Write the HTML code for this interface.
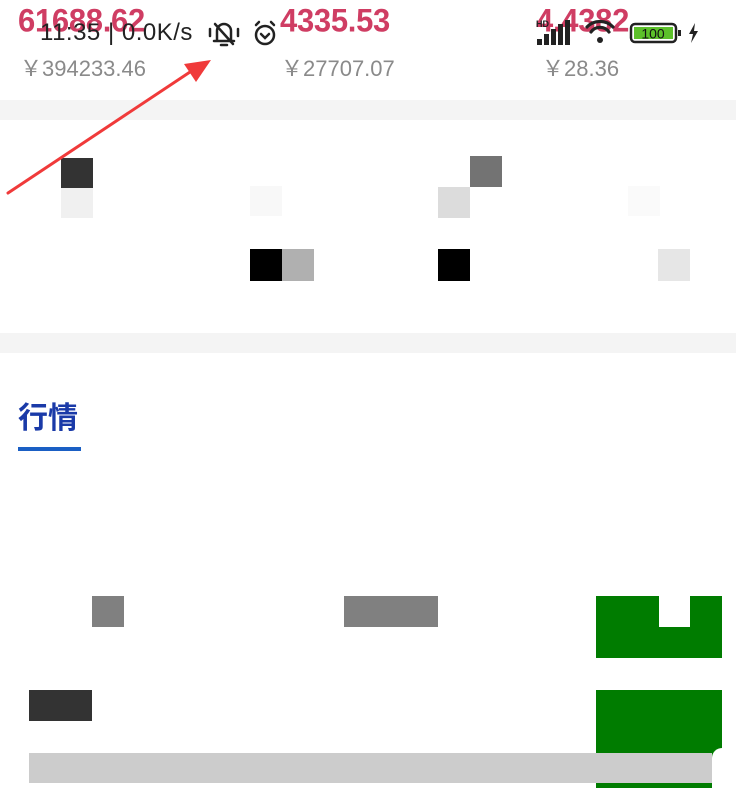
<!DOCTYPE html>
<html><head><meta charset="utf-8"><style>
*{margin:0;padding:0;box-sizing:border-box}
html,body{width:736px;height:788px;overflow:hidden;background:#fff;position:relative;font-family:"Liberation Sans","Noto Sans CJK SC",sans-serif}
.a{position:absolute}
.p{color:#cf3d63;font-size:31px;font-weight:bold;letter-spacing:-0.3px;top:2px;transform:scaleY(1.05);transform-origin:left top}
.s{color:#8a8a8a;font-size:22px;top:51px}
.b{position:absolute}
</style></head><body>
<div class="a p" style="left:18px">61688.62</div>
<div class="a p" style="left:280px">4335.53</div>
<div class="a p" style="left:536px">4.4382</div>
<div class="a s" style="left:20px">￥394233.46</div>
<div class="a s" style="left:281px">￥27707.07</div>
<div class="a s" style="left:542px">￥28.36</div>
<div class="a" style="left:40px;top:19px;font-size:24px;color:#222;letter-spacing:0.5px">11:35 | 0.0K/s</div>
<svg class="a" style="left:206px;top:16px" width="80" height="34" viewBox="0 0 80 34">
<g fill="none" stroke="#222" stroke-width="2.5" stroke-linecap="round">
<path d="M11 24 V15 a7 7 0 0 1 14 0 V24 M8 25 H28 M15 29 H21"/>
<path d="M9 8 L27 28"/>
<path d="M4 13 v7 M32 13 v7"/>
<circle cx="59" cy="19" r="9"/>
<path d="M55 18 l4 4 l4 -4 M50 9 l3 -3 M68 9 l-3 -3"/>
</g></svg>
<svg class="a" style="left:535px;top:17px" width="170" height="30" viewBox="0 0 170 30">
<text x="1" y="10" font-size="9" font-weight="bold" fill="#222" font-family="Liberation Sans">HD</text>
<g fill="#222"><rect x="2" y="22" width="5" height="6"/><rect x="9" y="17" width="5" height="11"/><rect x="16" y="12" width="5" height="16"/><rect x="23" y="7" width="5" height="21"/><rect x="30" y="3" width="5" height="25"/></g>
<g fill="none" stroke="#222" stroke-width="3.2" stroke-linecap="round"><path d="M52 10 a18 18 0 0 1 26 0"/><path d="M56 15 a11 11 0 0 1 18 0"/></g>
<circle cx="65" cy="23" r="3" fill="#222"/>
<rect x="96" y="7" width="45" height="18" rx="4" fill="none" stroke="#222" stroke-width="2.5"/>
<rect x="99" y="10" width="39" height="12" fill="#5cc02a"/>
<rect x="143" y="13" width="3" height="6" fill="#222"/>
<text x="118" y="21.5" font-size="14" text-anchor="middle" fill="#111" font-family="Liberation Sans">100</text>
<path d="M160 6 l-6 11 h4 l-2 9 l7 -12 h-4 z" fill="#222"/>
</svg>
<div class="b" style="left:0;top:100px;width:736px;height:20px;background:#f4f4f4"></div>
<div class="b" style="left:0;top:333px;width:736px;height:20px;background:#f4f4f4"></div>
<div class="b" style="left:61px;top:158px;width:32px;height:30px;background:#333"></div>
<div class="b" style="left:61px;top:188px;width:32px;height:30px;background:#f0f0f0"></div>
<div class="b" style="left:250px;top:186px;width:32px;height:30px;background:#f8f8f8"></div>
<div class="b" style="left:470px;top:156px;width:32px;height:31px;background:#737373"></div>
<div class="b" style="left:438px;top:187px;width:32px;height:31px;background:#dcdcdc"></div>
<div class="b" style="left:628px;top:186px;width:32px;height:30px;background:#fafafa"></div>
<div class="b" style="left:250px;top:249px;width:32px;height:32px;background:#000"></div>
<div class="b" style="left:282px;top:249px;width:32px;height:32px;background:#b0b0b0"></div>
<div class="b" style="left:438px;top:249px;width:32px;height:32px;background:#000"></div>
<div class="b" style="left:658px;top:249px;width:32px;height:32px;background:#e6e6e6"></div>
<div class="a" style="left:18px;top:393px;font-size:30px;font-weight:bold;color:#1a3aa8;font-family:'Noto Sans CJK SC',sans-serif">行情</div>
<div class="b" style="left:18px;top:447px;width:63px;height:4px;background:#1a5fc4"></div>
<div class="b" style="left:92px;top:596px;width:32px;height:31px;background:#808080"></div>
<div class="b" style="left:344px;top:596px;width:94px;height:31px;background:#808080"></div>
<div class="b" style="left:596px;top:596px;width:126px;height:62px;background:#007c00"></div>
<div class="b" style="left:659px;top:596px;width:31px;height:31px;background:#fff"></div>
<div class="b" style="left:29px;top:690px;width:63px;height:31px;background:#333"></div>
<div class="b" style="left:596px;top:690px;width:126px;height:98px;background:#007c00"></div>
<div class="b" style="left:712px;top:748px;width:12px;height:40px;background:#fff;border-top-left-radius:10px"></div>
<div class="b" style="left:29px;top:753px;width:683px;height:30px;background:#cccccc"></div>
<svg class="a" style="left:0;top:50px" width="230" height="150" viewBox="0 0 230 150">
<path d="M8 143 L190 22" stroke="#f03a3a" stroke-width="3" stroke-linecap="round"/>
<path d="M211 10 L184 14 L196 32 Z" fill="#f03a3a"/>
</svg>
</body></html>
